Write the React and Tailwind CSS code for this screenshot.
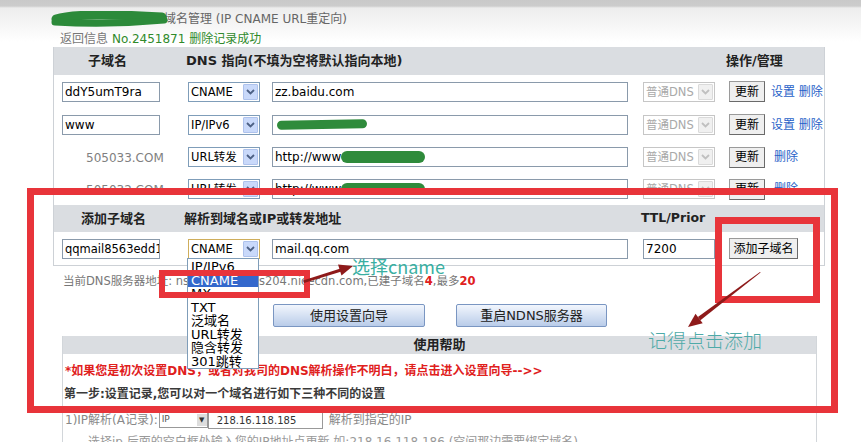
import React from 'react';

const font = "font-['DejaVu_Sans','Noto_Sans_CJK_SC',sans-serif]";

function Select({ value, disabled, focus }) {
  const border = focus ? 'border-[#cfae5c]' : disabled ? 'border-[#c6c6c6]' : 'border-[#7f9db9]';
  return (
    <div className={`flex h-[20px] w-[72px] items-center gap-[1px] border ${border} bg-white pl-[2px] pr-[1px]`}>
      <span className={`flex-1 overflow-hidden whitespace-nowrap text-[11.5px] leading-[16px] ${disabled ? 'text-[#a9a9a9]' : 'text-black'}`}>
        {value}
      </span>
      <span
        className={`flex h-[16px] w-[15px] shrink-0 items-center justify-center rounded-[1px] border ${
          disabled ? 'border-[#dadada] bg-[#f0f0f0]' : 'border-[#aec2ec] bg-[#c9d9fa]'
        }`}
      >
        <svg width="9" height="6" viewBox="0 0 9 6">
          <path d="M1 1l3.5 3.5L8 1" fill="none" stroke={disabled ? '#c0c0c0' : '#4d6185'} strokeWidth="1.8" />
        </svg>
      </span>
    </div>
  );
}

function Input({ w, size = 'text-[12px]', children }) {
  return (
    <div className={`flex h-[20px] ${w} items-center overflow-hidden whitespace-nowrap border border-[#8a9aab] bg-white pl-[2px] ${size} leading-[16px] text-black`}>
      {children}
    </div>
  );
}

function Btn({ children, w = 'w-[36px]' }) {
  return (
    <div className={`flex h-[21px] ${w} items-center justify-center border border-[#6a6a6a] border-t-[#9a9a9a] border-l-[#9a9a9a] bg-[#efefef] text-[12px] leading-[16px] text-black`}>
      {children}
    </div>
  );
}

const rows = [
  { name: 'ddY5umT9ra', type: 'CNAME', target: 'zz.baidu.com', setting: true, h: 'h-[33px]' },
  { name: 'www', type: 'IP/IPv6', blob: 'ip', setting: true, h: 'h-[33px]' },
  { label: '505033.COM', type: 'URL转发', target: 'http://www', blob: 'url', h: 'h-[32px]' },
  { label: '505032.COM', type: 'URL转发', target: 'http://www', blob: 'url', h: 'h-[32px]' },
];

const options = ['IP/IPv6', 'CNAME', 'MX', 'TXT', '泛域名', 'URL转发', '隐含转发', '301跳转'];

export default function App() {
  return (
    <div className={`relative h-[442px] w-[861px] overflow-hidden bg-[linear-gradient(#c9c9c9_0px,#cccccc_6px,#ededed_8px,#ffffff_42px)] ${font}`}>
      {/* Title */}
      <div className="flex h-[31px] items-center pl-[50px] pt-[7px]">
        <svg className="relative z-10" width="118" height="17" viewBox="0 0 118 17">
          <path d="M6 8 C 22 3, 62 3, 112 6" stroke="#2c8a3a" strokeWidth="9" strokeLinecap="round" fill="none" />
          <path d="M5 11 C 40 13, 82 12, 114 9" stroke="#2c8a3a" strokeWidth="7" strokeLinecap="round" fill="none" />
        </svg>
        <span className="-ml-[4px] text-[12px] text-[#666]">域名管理 (IP CNAME URL重定向)</span>
      </div>
      <div className="flex h-[16px] items-center pl-[60px] text-[12px] leading-none">
        <span className="text-[#777]">返回信息</span>
        <span className="ml-[4px] text-[#2f8a2a]">No.2451871 删除记录成功</span>
      </div>

      {/* DNS table */}
      <div className="ml-[53px] w-[772px] border-x border-b border-[#cdd1d6]">
        <div className="flex h-[28px] items-center bg-[#dadde1] text-[13px] font-bold text-[#222]">
          <span className="w-[132px] pl-[34px]">子域名</span>
          <span className="w-[540px]">DNS 指向(不填为空将默认指向本地)</span>
          <span>操作/管理</span>
        </div>
        {rows.map((r) => (
          <div key={r.type + (r.name || r.label)} className={`grid grid-cols-[134px_84px_371px_86px_1fr] items-center bg-white ${r.h}`}>
            <div className="pl-[8px]">
              {r.name ? (
                <Input w="w-[98px]">{r.name}</Input>
              ) : (
                <span className="pl-[24px] text-[12px] text-[#808080]">{r.label}</span>
              )}
            </div>
            <Select value={r.type} />
            <Input w="w-[356px]">
              {r.target}
              {r.blob === 'ip' && <span className="ml-[2px] inline-block h-[9px] w-[90px] -rotate-1 rounded-full bg-[#2f8b3b]" />}
              {r.blob === 'url' && <span className="inline-block h-[12px] w-[84px] rounded-full bg-[#2f8b3b]" />}
            </Input>
            <Select value="普通DNS" disabled />
            <div className="flex items-center text-[12px] text-[#2862c8]">
              <Btn>更新</Btn>
              {r.setting ? <span className="ml-[6px]">设置 删除</span> : <span className="ml-[9px]">删除</span>}
            </div>
          </div>
        ))}
        <div className="flex h-[27px] items-center bg-[#dadde1] text-[13px] font-bold text-[#222]">
          <span className="w-[130px] pl-[27px]">添加子域名</span>
          <span className="w-[457px]">解析到域名或IP或转发地址</span>
          <span className="text-[12.5px]">TTL/Prior</span>
        </div>
        <div className="grid h-[33px] grid-cols-[134px_84px_371px_86px_1fr] items-center bg-white">
          <div className="pl-[8px]">
            <Input w="w-[98px]" size="text-[11.5px]">qqmail8563edd1</Input>
          </div>
          <Select value="CNAME" focus />
          <Input w="w-[356px]">mail.qq.com</Input>
          <Input w="w-[72px]">7200</Input>
          <Btn w="w-[69px]">添加子域名</Btn>
        </div>
      </div>

      <div className="flex h-[31px] items-center pl-[63px] text-[11.5px] whitespace-nowrap text-[#777]">
        当前DNS服务器地址: ns1.dnsv5s2.ns204.nicecdn.com,已建子域名
        <b className="text-[#e02020]">4</b>,最多<b className="text-[#e02020]">20</b>
      </div>

      <div className="mt-[7px] flex h-[23px] text-[13px] text-[#222]">
        <div className="ml-[273px] flex w-[152px] items-center justify-center rounded-[2px] border border-[#7a96c2] bg-[linear-gradient(#f2f6fd,#b9cce9)]">使用设置向导</div>
        <div className="ml-[31px] flex w-[151px] items-center justify-center rounded-[2px] border border-[#7a96c2] bg-[linear-gradient(#f2f6fd,#b9cce9)]">重启NDNS服务器</div>
      </div>

      {/* Help */}
      <div className="ml-[62px] mt-[9px] w-[755px] border-x border-[#d2d6da] bg-white">
        <div className="flex h-[18px] items-center justify-center bg-[#dadde1] text-[13px] font-bold text-[#222]">使用帮助</div>
        <div className="h-[32px] pl-[2px] pt-[9px] text-[12px] font-bold leading-[16px] text-[#e0201c]">
          *如果您是初次设置DNS，或者对我司的DNS解析操作不明白，请点击进入设置向导--&gt;&gt;
        </div>
        <div className="h-[20px] pl-[1px] text-[12px] font-bold leading-[16px] text-[#3a3a3a]">第一步:设置记录,您可以对一个域名进行如下三种不同的设置</div>
        <div className="flex h-[28px] items-center pl-[2px] text-[12px] text-[#888]">
          <span>1)IP解析(A记录):</span>
          <div className="ml-[1px] flex h-[16px] w-[49px] items-center justify-between border border-[#999] bg-white pl-[2px] text-[9px] text-[#555]">
            IP
            <span className="flex h-[12px] w-[10px] items-center justify-center bg-[#ddd] text-[7px] text-[#333]">▼</span>
          </div>
          <div className="flex h-[18px] w-[115px] items-center border border-[#999] bg-white pl-[8px] text-[10px] text-[#333]">218.16.118.185</div>
          <span className="ml-[6px]">解析到指定的IP</span>
        </div>
        <div className="pl-[25px] text-[12px] leading-[16px] text-[#999]">选择ip 后面的空白框处输入您的IP地址点更新 如:218.16.118.186 (空间那边需要绑定域名)</div>
      </div>

      {/* Open dropdown */}
      <div className="absolute left-[187px] top-[258px] w-[72px] border border-[#7f9db9] bg-white pt-[1px] text-[13px] leading-[13.5px] text-black">
        {options.map((o) => (
          <div key={o} className={`pl-[3px] ${o === 'CNAME' ? 'bg-[#3468cc] text-white' : ''}`}>
            {o}
          </div>
        ))}
      </div>

      {/* Annotations */}
      <div className="absolute left-[27px] top-[188px] h-[225px] w-[811px] border-[7px] border-[#e8343a]" />
      <div className="absolute left-[159px] top-[270px] h-[28px] w-[151px] border-[6px] border-[#e8343a]" />
      <div className="absolute left-[715px] top-[217px] h-[86px] w-[105px] border-[7px] border-[#e8343a]" />

      <svg className="pointer-events-none absolute left-0 top-0" width="861" height="442" viewBox="0 0 861 442">
        <polygon points="303,280.5 340.5,268.5 341.5,271.5 304,283" fill="#8e1a1a" />
        <polygon points="353,266 338,264.5 341.5,275.5" fill="#8e1a1a" />
        <polygon points="760,272 760.6,272.6 700.4,320.3 697.9,317" fill="#8e1a1a" />
        <polygon points="688,327 702.7,323.3 695.5,313.7" fill="#8e1a1a" />
      </svg>

      <div className="absolute left-[352px] top-[256px] font-['Noto_Sans_CJK_SC',sans-serif] text-[18px] leading-[20px] font-normal text-[#3aafa2]">选择cname</div>
      <div className="absolute left-[648px] top-[329px] font-['Noto_Sans_CJK_SC',sans-serif] text-[19px] leading-[22px] font-light text-[#4eaaa8]">记得点击添加</div>
    </div>
  );
}
